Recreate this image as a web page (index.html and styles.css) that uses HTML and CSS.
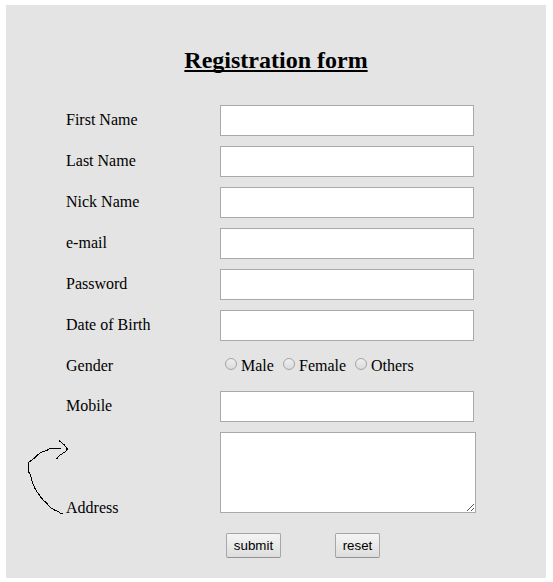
FILE: index.html
```html
<!DOCTYPE html>
<html lang="en"><head><meta charset="utf-8"><title>Registration form</title><link rel="stylesheet" href="styles.css"></head>
<body>
<form class="panel">
<h2 class="title">Registration form</h2>
<div class="row"><label for="first">First Name</label><input class="field" id="first" type="text"></div>
<div class="row"><label for="last">Last Name</label><input class="field" id="last" type="text"></div>
<div class="row"><label for="nick">Nick Name</label><input class="field" id="nick" type="text"></div>
<div class="row"><label for="email">e-mail</label><input class="field" id="email" type="text"></div>
<div class="row"><label for="pass">Password</label><input class="field" id="pass" type="password"></div>
<div class="row"><label for="dob">Date of Birth</label><input class="field" id="dob" type="text"></div>
<div class="row gender"><span>Gender</span><div class="options">
<label class="option"><input class="radio" type="radio" name="gender">Male</label>
<label class="option female"><input class="radio" type="radio" name="gender">Female</label>
<label class="option"><input class="radio" type="radio" name="gender">Others</label>
</div></div>
<div class="row"><label for="mobile">Mobile</label><input class="field" id="mobile" type="text"></div>
<div class="row address"><label for="address">Address</label><div class="area-wrap"><textarea class="area" id="address"></textarea><svg class="grip" viewBox="0 0 7 7"><path d="M0 7L7 0M4 7L7 4"/></svg></div>
<svg class="arrow" viewBox="0 0 44 77"><path d="M36.500 74.500H34.500L32.500 72.500L28.500 71L24.500 68.500L20.500 64L17 61L12.500 55L9 49.500L7 45L5.500 40.500L4.500 36L2.500 32.500V23.500L5 21.500L8 19.500L11 16.500L15 13.500L20.500 11.500L23.500 9.800L28 9.500H34.500M33 1.500L36.500 4.500L38 5.500L41.500 10L39 13L34 16L30.500 20"/></svg></div>
<div class="actions"><button class="button submit" type="button">submit</button><button class="button reset" type="button">reset</button></div>
</form>
</body></html>
```

FILE: styles.css
```css
body {
  margin: 0;
  background: #fff;
  font: 16px "Liberation Serif", serif;
  color: #000;
}
.panel {
  box-sizing: border-box;
  width: 540px;
  height: 573px;
  margin: 5px 0 0 6px;
  padding: 41px 60px 0;
  background: #e4e4e4;
}
.title {
  margin: 0 0 31px;
  font-size: 24px;
  line-height: 28px;
  text-align: center;
  text-decoration: underline;
  text-decoration-skip-ink: none;
}
.row {
  display: grid;
  grid-template-columns: 154px 256px;
  align-items: center;
  height: 31px;
  margin-bottom: 10px;
}
.row > label {
  padding-bottom: 2px;
}
.field, .area {
  box-sizing: border-box;
  margin: 0;
  border: 1px solid #a9a9a9;
  border-radius: 0;
  background: #fff;
}
.field {
  width: 254px;
  height: 31px;
}
.gender {
  height: 30px;
}
.options {
  display: flex;
  padding-left: 5px;
}
.option {
  display: flex;
  width: 58px;
}
.female {
  width: 72px;
}
.radio {
  appearance: none;
  box-sizing: border-box;
  flex: none;
  width: 12px;
  height: 12px;
  margin: 1px 4px 0 0;
  border: 1px solid #a4a4a4;
  border-radius: 50%;
  background: linear-gradient(#eee, #dcdcdc);
}
.address {
  position: relative;
  height: 81px;
  margin-bottom: 20px;
  align-items: end;
}
.address > label {
  padding: 0;
  line-height: 18px;
  margin-bottom: -4px;
}
.area-wrap {
  position: relative;
  width: 256px;
  height: 81px;
}
.area {
  display: block;
  width: 256px;
  height: 81px;
  resize: none;
}
.grip {
  position: absolute;
  right: 2px;
  bottom: 2px;
  width: 7px;
  height: 7px;
  fill: none;
  stroke: #555;
  shape-rendering: crispEdges;
}
.arrow {
  position: absolute;
  left: -40px;
  top: 7px;
  width: 44px;
  height: 77px;
  fill: none;
  stroke: #000;
  shape-rendering: crispEdges;
}
.actions {
  display: flex;
  gap: 54px;
  padding-left: 160px;
}
.button {
  box-sizing: border-box;
  height: 25px;
  padding: 0;
  border: 1px solid #a6a6a6;
  border-bottom-color: #929292;
  border-radius: 2px;
  background: linear-gradient(#f5f5f5, #ddd);
  font: 13.333px "Liberation Sans", sans-serif;
  color: #000;
}
.submit {
  width: 55px;
}
.reset {
  width: 45px;
}
```
